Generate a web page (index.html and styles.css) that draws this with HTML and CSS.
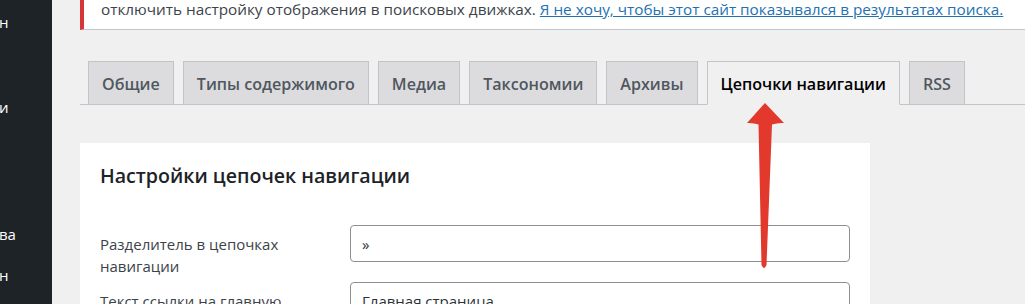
FILE: index.html
```html
<!DOCTYPE html>
<html lang="ru">
<head>
    <meta charset="UTF-8">
    <meta name="viewport" content="width=device-width, initial-scale=1.0">
    <title>Настройки — цепочки навигации</title>
    <link rel="stylesheet" href="styles.css">
</head>
<body>
    <div class="admin-menu">
        <ul>
            <li class="menu-item first">н</li>
            <li class="menu-item">и</li>
            <li class="menu-item far">ва</li>
            <li class="menu-item near">н</li>
        </ul>
    </div>

    <div class="content">
        <div class="notice">
            отключить настройку отображения в поисковых движках. <a href="#">Я не хочу, чтобы этот сайт показывался в результатах поиска.</a>
        </div>

        <nav class="nav-tabs">
            <a href="#" class="nav-tab">Общие</a>
            <a href="#" class="nav-tab">Типы содержимого</a>
            <a href="#" class="nav-tab">Медиа</a>
            <a href="#" class="nav-tab">Таксономии</a>
            <a href="#" class="nav-tab">Архивы</a>
            <a href="#" class="nav-tab active">Цепочки навигации</a>
            <a href="#" class="nav-tab">RSS</a>
        </nav>

        <div class="card">
            <h2>Настройки цепочек навигации</h2>
            <div class="field-row">
                <label for="separator">Разделитель в цепочках навигации</label>
                <input type="text" id="separator" value="»">
            </div>
            <div class="field-row">
                <label for="homeText">Текст ссылки на главную страницу</label>
                <input type="text" id="homeText" value="Главная страница">
            </div>
        </div>
    </div>

    <!-- red arrow drawn over the screenshot -->
    <svg class="arrow" width="1025" height="304" viewBox="0 0 1025 304">
        <path d="M765 103 L784 123 Q778 122.5 772 124.5 L766.5 265 Q764 271 761.5 265 L758.5 124.5 Q753 122.5 747 123 Z" fill="#e2392c"/>
    </svg>
</body>
</html>
```

FILE: styles.css
```css
body {
    font-family: "Open Sans", "Noto Sans", sans-serif;
    background-color: #f0f0f1;
    color: #3c434a;
    margin: 0;
    padding: 0;
    display: flex;
    height: 304px;
    overflow: hidden;
}

.admin-menu {
    width: 52px;
    flex-shrink: 0;
    background-color: #1d2327;
    color: #fff;
}

.admin-menu ul {
    list-style: none;
    margin: 0;
    padding: 0;
}

.menu-item {
    font-size: 15px;
    line-height: 20px;
    margin-left: -1px;
}

.menu-item.first {
    margin-top: 12px;
    margin-bottom: 65px;
}

.menu-item.far {
    margin-top: 107px;
}

.menu-item.near {
    margin-top: 21px;
}

.content {
    flex: 1;
    padding-left: 28px;
    min-width: 0;
}

.notice {
    background: #fff;
    border-left: 4px solid #d63638;
    border-bottom: 1px solid #c3c4c7;
    padding: 0 12px 11px 17px;
    font-size: 15.3px;
    line-height: 18px;
    white-space: nowrap;
}

.notice a {
    color: #2271b1;
}

.nav-tabs {
    display: flex;
    margin-top: 31px;
    border-bottom: 1px solid #c3c4c7;
}

.nav-tab {
    margin-left: 9px;
    padding: 7px 13px 5px;
    border: 1px solid #c3c4c7;
    border-bottom: none;
    background-color: #dcdcde;
    color: #50575e;
    font-size: 16.1px;
    font-weight: 600;
    line-height: 30px;
    text-decoration: none;
    white-space: nowrap;
}

.nav-tab:first-child {
    margin-left: 8px;
}

.nav-tab.active {
    background-color: #f0f0f1;
    color: #000;
    border-bottom: 1px solid #f0f0f1;
    margin-bottom: -1px;
}

.card {
    width: 790px;
    box-sizing: border-box;
    margin-top: 38px;
    background: #fff;
    padding: 20px 20px 0;
    height: 200px;
}

.card h2 {
    margin: 0 0 36px;
    font-size: 19.6px;
    font-weight: 600;
    line-height: 26px;
    color: #1d2327;
}

.field-row {
    display: flex;
    align-items: flex-start;
    margin-bottom: 5px;
}

.field-row label {
    width: 250px;
    flex-shrink: 0;
    padding-top: 8px;
    padding-right: 40px;
    box-sizing: border-box;
    font-size: 15px;
    line-height: 22px;
}

.field-row input {
    width: 500px;
    height: 37px;
    box-sizing: border-box;
    border: 1px solid #8c8f94;
    border-radius: 4px;
    padding: 0 11px;
    font-family: inherit;
    font-size: 15px;
    color: #2c3338;
}

.arrow {
    position: absolute;
    left: 0;
    top: 0;
    pointer-events: none;
}
```
